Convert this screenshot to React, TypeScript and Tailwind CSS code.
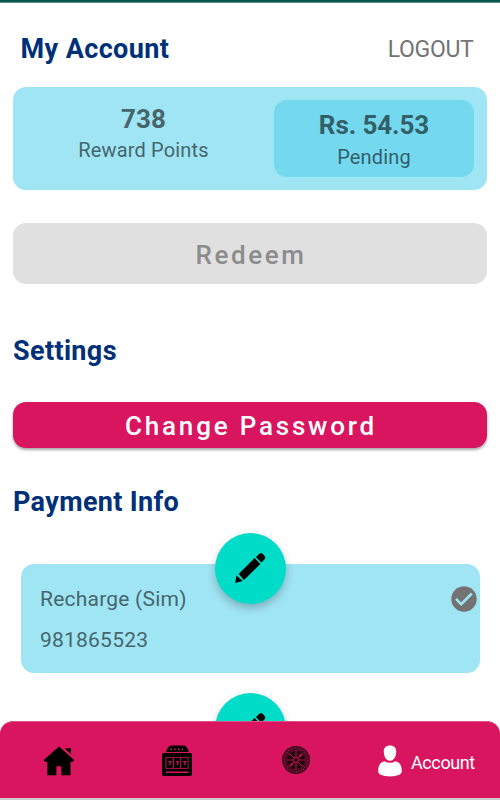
import type { ReactNode } from "react";

function SectionTitle({ children }: { children: ReactNode }) {
  return <h2 className="h-8 text-[27px] leading-8 font-bold tracking-[0.35px] text-[#003078]">{children}</h2>;
}

function PencilIcon() {
  return (
    <svg viewBox="0 0 32 32" className="w-8 h-8 mr-px" fill="#000">
      <path d="M1.2 31l1.2-7.500 6.300 5.400z" />
      <path d="M4.600 22.100L20.600 6.100l5.800 5.800L10 28z" />
      <path d="M21.900 4.900l3.800-3.500q1.200-1 2.700.2l2.300 2.400q1.200 1.400.1 2.900l-3.400 3.700z" />
    </svg>
  );
}

function EditButton() {
  return (
    <button className="absolute left-1/2 -top-[31.5px] -ml-[35px] w-[71px] h-[71px] rounded-full bg-[#00dcc8] shadow-[0_4px_8px_rgba(0,0,0,0.24)] flex items-center justify-center">
      <PencilIcon />
    </button>
  );
}

function HomeIcon() {
  return (
    <svg viewBox="0 0 32 30" className="w-8 h-[30px]" fill="#000">
      <path d="M16 .5L30.8 13.8Q31.4 15.8 29 15.8H27.5V29.2H18.4V20.3H13.4V29.2H4.3V15.8H2.5Q.3 15.6 1 13.8z" />
      <path d="M21.7 2.3H28V8.3z" />
    </svg>
  );
}

function SlotIcon() {
  return (
    <svg viewBox="0 0 32 32" className="w-8 h-8">
      <path d="M5 7Q6 3 8 1.5Q9 .4 11 .4H22Q24 .4 25 1.5Q27 3 27.7 7z" fill="#000" />
      <path d="M9.500 4.200h1.500M13.200 4.200h1.500M17 4.200h1.500M20.800 4.200h1.500" stroke="#da1560" strokeWidth="1.400" />
      <rect x="1" y="8" width="30" height="23" rx="2" fill="#000" />
      <path d="M4.500 12.200h23v11.600h-23zM5 26.600h22.500v1.500H5z" fill="#da1560" />
      <path d="M5.400 13h6.500v10H5.400zM12.800 13h6.500v10h-6.500zM20.200 13h6.500v10h-6.500z" fill="#000" />
      <path
        d="M7.200 16.700h2.700l-1.500 3.300M14.700 16.700h2.700l-1.500 3.300M22.100 16.700h2.700l-1.500 3.300"
        fill="none"
        stroke="#c9135a"
        strokeWidth="1.200"
      />
    </svg>
  );
}

function WheelIcon() {
  return (
    <svg viewBox="0 0 30 30" className="w-[30px] h-[30px]" fill="none">
      <circle cx="15" cy="15" r="14" fill="#3a0a1c" />
      <circle cx="15" cy="15" r="11.700" stroke="#a81049" strokeWidth="1.600" strokeDasharray="1.200 1.250" />
      <circle cx="15" cy="15" r="9.600" fill="#180309" stroke="#7d0d38" strokeWidth=".8" />
      <path d="M15 5.500v19M5.500 15h19M8.300 8.300l13.400 13.400M8.300 21.700L21.700 8.300" stroke="#b5124f" strokeWidth="1.200" />
      <circle cx="15" cy="15" r="2.400" fill="#180309" stroke="#c9135a" strokeWidth="1" />
      <circle cx="19.500" cy="10.500" r="1.400" stroke="#c9135a" strokeWidth=".8" />
      <circle cx="10.500" cy="19.500" r="1.400" stroke="#c9135a" strokeWidth=".8" />
    </svg>
  );
}

function PersonIcon() {
  return (
    <svg viewBox="0 0 26 32" className="w-[26px] h-8" fill="#fff">
      <path d="M13 .4C17 .4 19.500 2.800 19.200 7C19 12 16.600 15.800 13 15.800S7 12 6.800 7C6.500 2.800 9 .4 13 .4z" />
      <path d="M7.500 16.200Q10 17.800 13 17.800T18.500 16.200C22.500 17.200 24.800 20 24.800 26.500Q24.800 28.500 22.500 29.700Q18.500 31.400 13 31.400T3.500 29.700Q1.200 28.500 1.200 26.500C1.200 20 3.500 17.200 7.500 16.200z" />
    </svg>
  );
}

function CheckBadge() {
  return (
    <svg viewBox="0 0 26 26" className="w-[26px] h-[26px]">
      <circle cx="13" cy="13" r="12.700" fill="#737373" />
      <path d="M5 12.900l5.200 5.200L20.800 7.500" fill="none" stroke="#a0e5f4" strokeWidth="2.600" />
    </svg>
  );
}

export default function App() {
  return (
    <div className="relative w-[500px] h-[800px] overflow-hidden bg-white font-[Roboto,sans-serif]">
      <div className="h-[3px] bg-[#00574b] border-b border-[#5d8f87]" />

      <header className="h-[84px] pt-[30px] pl-[20.500px] pr-[26.500px] flex justify-between">
        <h1 className="h-8 text-[27px] leading-8 font-bold tracking-[0.4px] text-[#003078]">My Account</h1>
        <button className="h-8 text-[23px] leading-[33px] tracking-[-0.3px] text-[#737373]">LOGOUT</button>
      </header>

      <main className="px-[13px]">
        <section className="h-[103px] rounded-[13px] bg-[#a0e5f4] flex justify-between p-[13px]">
          <div className="w-[235px] pt-[3px] text-center">
            <p className="h-8 text-[26px] leading-8 font-bold text-[#46656d]">738</p>
            <p className="h-8 text-[20px] leading-[31px] tracking-[0.16px] text-[#46656d]">Reward Points</p>
          </div>
          <div className="w-[200px] h-[77px] rounded-[13px] bg-[#74d8ef] pt-[9px] text-center">
            <p className="h-8 text-[26px] leading-8 font-bold tracking-[-0.1px] text-[#335f69]">Rs. 54.53</p>
            <p className="h-8 text-[20px] leading-8 tracking-[0.16px] text-[#335f69]">Pending</p>
          </div>
        </section>

        <button className="mt-[33px] w-full h-[61px] rounded-[13px] bg-[#e0e0e0] text-[26px] leading-none font-medium tracking-[2.6px] text-[#8c8c8c] pt-[3px] pl-[2px]">
          Redeem
        </button>

        <div className="pt-[51px]">
          <SectionTitle>Settings</SectionTitle>
        </div>

        <button className="mt-[35px] w-full h-[46px] rounded-[13px] bg-[#da1560] text-[26px] leading-none font-medium tracking-[2.8px] text-white shadow-[0_2px_3px_rgba(0,0,0,0.35)] pt-[2px] pl-[2px]">
          Change Password
        </button>

        <div className="pt-[38px]">
          <SectionTitle>Payment Info</SectionTitle>
        </div>

        <div className="mt-[46px] mx-[7.500px] flex flex-col gap-[51px]">
          <div className="relative h-[109px] rounded-[13px] bg-[#a0e5f4] pt-[19px] pl-[19.500px] pr-[3px] flex justify-between text-[21px] leading-8 tracking-[0.22px] text-[#46656d]">
            <div className="flex flex-col gap-[9px]">
              <p className="h-8">Recharge (Sim)</p>
              <p className="h-8">981865523</p>
            </div>
            <div className="pt-[3px]">
              <CheckBadge />
            </div>
            <EditButton />
          </div>
          <div className="relative h-[109px] rounded-[13px] bg-[#a0e5f4]">
            <EditButton />
          </div>
        </div>
      </main>

      <div className="absolute left-0 bottom-0 w-full h-[79px]">
        <div className="h-full rounded-t-[13px] bg-[#cfcaca] pb-[2px]">
          <nav className="h-[77px] rounded-t-[13px] bg-[#da1560] border-t border-[#dc5087] flex items-start pt-[23px]">
            <a className="pl-[43px] pt-[0.5px]">
              <HomeIcon />
            </a>
            <a className="pl-[86px]">
              <SlotIcon />
            </a>
            <a className="pl-[87.500px]">
              <WheelIcon />
            </a>
            <a className="pl-[66.500px] flex text-white">
              <PersonIcon />
              <span className="pl-[8px] pt-[2px] text-[18px] leading-8 tracking-[-0.4px]">Account</span>
            </a>
          </nav>
        </div>
      </div>
    </div>
  );
}
